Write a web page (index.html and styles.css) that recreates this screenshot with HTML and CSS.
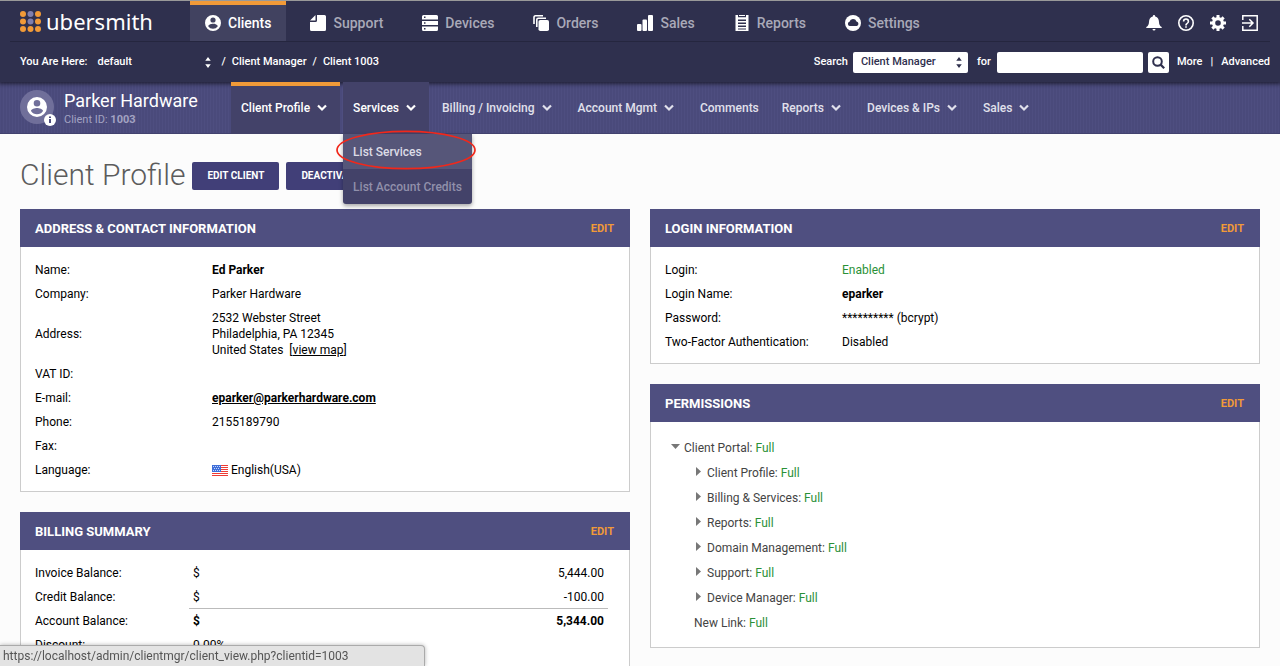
FILE: index.html
```html
<!DOCTYPE html>
<html lang="en">
<head>
<meta charset="utf-8">
<title>Client Profile</title>
<link rel="stylesheet" href="styles.css">
</head>
<body>
<header class="top">
  <div class="main-bar">
    <a class="logo" href="#">
      <svg width="21" height="21" viewBox="0 0 21 21" fill="#f19a38"><circle cx="3" cy="3" r="3"/><circle cx="10.500" cy="3" r="3" fill="#7f7fae"/><circle cx="18" cy="3" r="3"/><circle cx="3" cy="10.500" r="3"/><circle cx="10.500" cy="10.500" r="3" fill="#7f7fae"/><circle cx="18" cy="10.500" r="3"/><circle cx="3" cy="18" r="3"/><circle cx="10.500" cy="18" r="3"/><circle cx="18" cy="18" r="3"/></svg>
      <span>ubersmith</span>
    </a>
    <nav class="main-nav">
      <a class="tab active" href="#"><svg class="icon" viewBox="2 2 20 20"><path d="M12 2a10 10 0 1 0 0 20 10 10 0 0 0 0-20zm0 3a3 3 0 1 1 0 6.500 3 3 0 0 1 0-6.500zm0 14.200a7.200 7.200 0 0 1-6-3.220c.030-1.990 4-3.080 6-3.080s5.970 1.090 6 3.080a7.200 7.200 0 0 1-6 3.220z"/></svg>Clients</a>
      <a class="tab" href="#"><svg class="icon" viewBox="0 0 16 16"><path d="M7 0h7.500A1.500 1.500 0 0 1 16 1.500v13a1.500 1.500 0 0 1-1.500 1.500h-13A1.500 1.500 0 0 1 0 14.500V7h5.500A1.500 1.500 0 0 0 7 5.500zM5.500 0v5.500H0z"/></svg>Support</a>
      <a class="tab" href="#"><svg class="icon" viewBox="0 0 16 16"><path fill-rule="evenodd" d="M1.500 0h13A1.500 1.500 0 0 1 16 1.500V4.500H0v-3A1.500 1.500 0 0 1 1.500 0zM2 1.500v1.500h1.500V1.500zM0 6h16v4H0zm2 1.200v1.500h1.500V7.200zM0 11.500h16v3a1.500 1.500 0 0 1-1.500 1.500h-13A1.500 1.500 0 0 1 0 14.500zM2 13v1.500h1.500V13z"/></svg>Devices</a>
      <a class="tab" href="#"><svg class="icon" viewBox="0 0 16 16"><rect x="5.500" y="5" width="10.500" height="11" rx="1.800"/><path d="M3.800 12V4.800a1.500 1.500 0 0 1 1.500-1.500H13M1 9V2A1.500 1.500 0 0 1 2.500.800H10" fill="none" stroke="#fff" stroke-width="1.600"/></svg>Orders</a>
      <a class="tab" href="#"><svg class="icon" viewBox="0 0 16 16"><rect x="0" y="9" width="4.500" height="7" rx="1"/><rect x="5.500" y="4.500" width="4.500" height="11.500" rx="1"/><rect x="11" y="0" width="5" height="16" rx="1"/></svg>Sales</a>
      <a class="tab" href="#"><svg class="icon" viewBox="0 0 16 16"><path fill-rule="evenodd" d="M1.500 0H4v2.200h8V0h2.500v16h-13zM4 4.500V6h8V4.500zm0 3V9h8V7.500zm0 3V12h8v-1.500zm0 3V14.500h8v-1z"/><path d="M5 0h6v1H5z"/></svg>Reports</a>
      <a class="tab" href="#"><svg class="icon" viewBox="0 0 16 16"><circle cx="8" cy="8" r="8"/><path fill="#2f304e" d="M4.800 11a2.200 2.200 0 0 1-.300-4.300A3.700 3.700 0 0 1 11.500 6.500a2.300 2.300 0 0 1 .200 4.500z"/></svg>Settings</a>
    </nav>
    <div class="tools">
      <a href="#" aria-label="Notifications"><svg viewBox="0 0 16 16"><path d="M8 0a1.200 1.200 0 0 1 1.200 1.200v.400C12 2.200 12.800 4.500 13 7c.150 2.500.800 4 2.700 5v1H.300v-1C2.200 11 2.850 9.500 3 7c.200-2.500 1-4.800 3.800-5.400v-.400A1.200 1.200 0 0 1 8 0zM6.500 14h3a1.500 1.500 0 0 1-3 0z"/></svg></a>
      <a href="#" aria-label="Help"><svg viewBox="2 2 20 20"><path d="M11 18h2v-2h-2v2zm1-16a10 10 0 1 0 0 20 10 10 0 0 0 0-20zm0 18a8 8 0 1 1 0-16 8 8 0 0 1 0 16zm0-14a4 4 0 0 0-4 4h2a2 2 0 1 1 4 0c0 2-3 1.750-3 5h2c0-2.250 3-2.500 3-5a4 4 0 0 0-4-4z"/></svg></a>
      <a href="#" aria-label="Preferences"><svg viewBox="0 0 16 16"><circle cx="8" cy="8" r="4.400" fill="none" stroke="#fff" stroke-width="3.200"/><path d="M6.500 0h3v3h-3zM6.500 13h3v3h-3zM0 6.500h3v3H0zM13 6.500h3v3h-3zM1.300 3.400l2.100-2.100 2 2-2.100 2.100zM10.600 12.700l2.100-2.100 2 2-2.100 2.100zM1.300 12.600l2-2 2.100 2.100-2 2zM10.600 3.300l2-2 2.100 2.100-2 2z"/></svg></a>
      <a href="#" aria-label="Log out"><svg viewBox="0 0 16 16"><path d="M.8 5V.8h14.400v14.400H.8V11M0 8h10.500M7.300 4.300 11 8l-3.700 3.700" fill="none" stroke="#fff" stroke-width="1.500"/></svg></a>
    </div>
  </div>
  <div class="sub-bar">
    <div class="crumbs">
      <label for="brand">You Are Here:</label>
      <span class="picker brand-picker">
        <select id="brand"><option>default</option></select>
        <svg class="updown" viewBox="0 0 6 12"><path d="M3 0l3 4H0zM3 12L0 8h6z"/></svg>
      </span>
      <span>/</span><a href="#">Client Manager</a><span>/</span><a href="#">Client 1003</a>
    </div>
    <form class="search">
      <label for="area">Search</label>
      <span class="picker area-picker">
        <select id="area"><option>Client Manager</option></select>
        <svg class="updown" viewBox="0 0 6 12"><path d="M3 0l3 4H0zM3 12L0 8h6z"/></svg>
      </span>
      <label class="for" for="query">for</label>
      <input id="query" type="text">
      <button type="button" aria-label="Search"><svg width="13" height="13" viewBox="0 0 13 13"><circle cx="5.500" cy="5.500" r="4.300" fill="none" stroke="#2f304e" stroke-width="2"/><path d="M8.600 8.600l3.600 3.600" stroke="#2f304e" stroke-width="2.200"/></svg></button>
      <a href="#">More</a><span>|</span><a href="#">Advanced</a>
    </form>
  </div>
</header>

<section class="banner">
  <div class="client">
    <div class="avatar">
      <svg width="36" height="36" viewBox="0 0 36 36"><circle cx="17" cy="17" r="17" fill="#706f9a"/><path fill="#fff" d="M17 7a10 10 0 1 0 0 20 10 10 0 0 0 0-20zm0 3a3.300 3.300 0 1 1 0 6.600 3.300 3.300 0 0 1 0-6.600zm0 14.200a7.200 7.200 0 0 1-6-3.220c.030-1.990 4-3.080 6-3.080s5.970 1.090 6 3.080a7.200 7.200 0 0 1-6 3.220z"/><circle cx="30" cy="30" r="6" fill="#fff"/><path d="M29 26.500h2v1.500h-2zM29 29h2v4h-2z" fill="#4d4c7f"/></svg>
    </div>
    <div>
      <div class="client-name">Parker Hardware</div>
      <div class="client-id">Client ID: <b>1003</b></div>
    </div>
  </div>
  <nav class="client-nav">
    <a class="item current" href="#">Client Profile<svg class="chev" viewBox="0 0 13 8"><path d="M1 1.500l4 4 4-4"/></svg></a>
    <div class="menu-holder">
      <a class="item open" href="#">Services<svg class="chev" viewBox="0 0 13 8"><path d="M1 1.500l4 4 4-4"/></svg></a>
      <div class="menu">
        <a class="hover" href="#">List Services</a>
        <a href="#">List Account Credits</a>
      </div>
      <svg class="ring" width="140" height="40" viewBox="0 0 140 40"><ellipse cx="70" cy="20" rx="69" ry="18.700" fill="none" stroke="#f1281b" stroke-width="1.700"/></svg>
    </div>
    <a class="item" href="#">Billing / Invoicing<svg class="chev" viewBox="0 0 13 8"><path d="M1 1.500l4 4 4-4"/></svg></a>
    <a class="item" href="#">Account Mgmt<svg class="chev" viewBox="0 0 13 8"><path d="M1 1.500l4 4 4-4"/></svg></a>
    <a class="item" href="#">Comments</a>
    <a class="item" href="#">Reports<svg class="chev" viewBox="0 0 13 8"><path d="M1 1.500l4 4 4-4"/></svg></a>
    <a class="item" href="#">Devices &amp; IPs<svg class="chev" viewBox="0 0 13 8"><path d="M1 1.500l4 4 4-4"/></svg></a>
    <a class="item" href="#">Sales<svg class="chev" viewBox="0 0 13 8"><path d="M1 1.500l4 4 4-4"/></svg></a>
  </nav>
</section>

<main>
  <div class="title-row">
    <h1>Client Profile</h1>
    <button type="button">EDIT CLIENT</button>
    <button type="button">DEACTIVATE</button>
  </div>
  <div class="columns">
    <div class="column">
      <section class="panel">
        <div class="panel-head"><h2>ADDRESS &amp; CONTACT INFORMATION</h2><a href="#">EDIT</a></div>
        <div class="panel-body">
          <table class="facts">
            <tr><th>Name:</th><td><b>Ed Parker</b></td></tr>
            <tr><th>Company:</th><td>Parker Hardware</td></tr>
            <tr><th>Address:</th><td>2532 Webster Street<br>Philadelphia, PA 12345<br>United States &nbsp;[<a href="#">view map</a>]</td></tr>
            <tr><th>VAT ID:</th><td></td></tr>
            <tr><th>E-mail:</th><td><b><a href="#">eparker@parkerhardware.com</a></b></td></tr>
            <tr><th>Phone:</th><td>2155189790</td></tr>
            <tr><th>Fax:</th><td></td></tr>
            <tr><th>Language:</th><td><span class="lang"><svg width="16" height="11" viewBox="0 0 16 11"><rect width="16" height="11" fill="#fff"/><path fill="none" stroke="#ee3b34" d="M0 .5h16M0 2.500h16M0 4.500h16M0 6.500h16M0 8.500h16M0 10.500h16"/><rect width="9" height="7" fill="#3f6fd8"/><path fill="none" stroke="#c3d5ff" stroke-dasharray="1 1" d="M1 1.500h7M2 3.500h6M1 5.500h7"/></svg>English(USA)</span></td></tr>
          </table>
        </div>
      </section>
      <section class="panel billing">
        <div class="panel-head"><h2>BILLING SUMMARY</h2><a href="#">EDIT</a></div>
        <div class="panel-body">
          <table class="facts money">
            <tr><th>Invoice Balance:</th><td>$</td><td class="amount">5,444.00</td></tr>
            <tr class="last-item"><th>Credit Balance:</th><td>$</td><td class="amount">-100.00</td></tr>
            <tr><th>Account Balance:</th><td><b>$</b></td><td class="amount"><b>5,344.00</b></td></tr>
            <tr><th>Discount:</th><td colspan="2">0.00%</td></tr>
          </table>
        </div>
      </section>
    </div>
    <div class="column">
      <section class="panel">
        <div class="panel-head"><h2>LOGIN INFORMATION</h2><a href="#">EDIT</a></div>
        <div class="panel-body">
          <table class="facts">
            <tr><th>Login:</th><td><span class="ok">Enabled</span></td></tr>
            <tr><th>Login Name:</th><td><b>eparker</b></td></tr>
            <tr><th>Password:</th><td>********** (bcrypt)</td></tr>
            <tr><th>Two-Factor Authentication:</th><td>Disabled</td></tr>
          </table>
        </div>
      </section>
      <section class="panel">
        <div class="panel-head"><h2>PERMISSIONS</h2><a href="#">EDIT</a></div>
        <div class="panel-body tree-body">
          <ul class="tree">
            <li><svg class="down" viewBox="0 0 9 5"><path d="M0 0h9L4.500 5z"/></svg>Client Portal: <span class="ok">Full</span>
              <ul>
                <li><svg class="right" viewBox="0 0 5 9"><path d="M0 0v9l5-4.500z"/></svg>Client Profile: <span class="ok">Full</span></li>
                <li><svg class="right" viewBox="0 0 5 9"><path d="M0 0v9l5-4.500z"/></svg>Billing &amp; Services: <span class="ok">Full</span></li>
                <li><svg class="right" viewBox="0 0 5 9"><path d="M0 0v9l5-4.500z"/></svg>Reports: <span class="ok">Full</span></li>
                <li><svg class="right" viewBox="0 0 5 9"><path d="M0 0v9l5-4.500z"/></svg>Domain Management: <span class="ok">Full</span></li>
                <li><svg class="right" viewBox="0 0 5 9"><path d="M0 0v9l5-4.500z"/></svg>Support: <span class="ok">Full</span></li>
                <li><svg class="right" viewBox="0 0 5 9"><path d="M0 0v9l5-4.500z"/></svg>Device Manager: <span class="ok">Full</span></li>
                <li class="leaf">New Link: <span class="ok">Full</span></li>
              </ul>
            </li>
          </ul>
        </div>
      </section>
    </div>
  </div>
</main>
<div class="status">https://localhost/admin/clientmgr/client_view.php?clientid=1003</div>
</body>
</html>
```
FILE: styles.css
```css
* { box-sizing: border-box; }

html { overflow: hidden; }

body {
  margin: 0;
  background: #fcfcfc;
  color: #000;
  font: 12px/16px Roboto, "Liberation Sans", sans-serif;
}

a { color: inherit; text-decoration: none; }

button, input, select { font: inherit; }

svg { display: block; flex: none; }

/* Top header */
.top {
  position: relative;
  background: #2f304e;
  border-top: 1px solid #999;
  color: #fff;
  font-weight: 500;
  box-shadow: 0 1px 4px rgba(0, 0, 0, .4);
}

.main-bar {
  display: flex;
  height: 41px;
  margin-left: 10px;
  margin-right: 10px;
  padding-left: 10px;
  border-bottom: 1px solid #25263f;
}

.logo {
  display: flex;
  width: 170px;
  gap: 5px;
  align-items: center;
  font: 22px/32px "Noto Sans", sans-serif;
}

.main-nav { display: flex; gap: 9px; }

.tab {
  display: flex;
  align-items: center;
  gap: 7px;
  padding: 4px 15px 0;
  color: #a9a9b8;
  font-size: 14px;
}

.tab.active {
  padding-top: 0;
  border-top: 4px solid #f19a38;
  background: #414260;
  color: #fff;
}

.icon { width: 16px; height: 16px; fill: #fff; }

.tools {
  display: flex;
  gap: 16px;
  align-items: center;
  margin-left: auto;
  padding: 4px 12px 0 0;
}

.tools svg { width: 16px; height: 16px; fill: #fff; }

.sub-bar {
  display: flex;
  justify-content: space-between;
  align-items: center;
  height: 40px;
  padding: 0 10px 0 20px;
}

.crumbs, .search { display: flex; align-items: center; font-size: 11px; }

.crumbs { gap: 6px; }

.picker { display: grid; align-items: center; }

.picker select, .picker svg { grid-area: 1 / 1; }

.picker select {
  width: 100%;
  height: 21px;
  padding: 0;
  border: 0;
  background: transparent;
  color: inherit;
  appearance: none;
}

.updown {
  width: 6px;
  height: 11px;
  justify-self: end;
  fill: currentColor;
  pointer-events: none;
}

.brand-picker { width: 118px; margin-right: 4px; padding: 0 0 0 4px; }

.area-picker {
  width: 115px;
  margin: 0 9px 0 5px;
  padding: 0 6px 0 8px;
  border-radius: 2px;
  background: #fff;
  color: #2f304e;
}

.search input {
  width: 146px;
  height: 21px;
  margin: 0 5px 0 6px;
  border: 0;
  border-radius: 2px;
  background: #fff;
}

.search button {
  display: grid;
  place-items: center;
  width: 21px;
  height: 21px;
  margin-right: 8px;
  padding: 0;
  border: 0;
  border-radius: 2px;
  background: #fff;
}

.search span:not(.picker) { padding: 0 8px; }

/* Client banner */
.banner {
  display: flex;
  height: 52px;
  background: repeating-linear-gradient(90deg, #4e4e80 0 1px, #4a4a7b 1px 3px);
  box-shadow: inset 0 5px 4px -3px rgba(0, 0, 0, .35), inset 0 -1px 0 #42426f;
}

.client {
  display: flex;
  gap: 8px;
  width: 231px;
  padding: 8px 0 0 20px;
  color: #fff;
}

.client-name { font-size: 18px; line-height: 22px; }

.client-id { color: #a3a3c2; font-size: 11px; }

.client-nav {
  position: relative;
  display: flex;
  gap: 3px;
  color: #e1e1ec;
  font-size: 12px;
  font-weight: 500;
}

.item {
  display: flex;
  height: 100%;
  gap: 7px;
  align-items: center;
  padding: 0 10px;
}

.item.current, .item.open { background: #434269; color: #fff; }

.item.current { border-top: 4px solid #f19a38; padding-bottom: 4px; }

.chev { width: 13px; height: 8px; }

.chev path { fill: none; stroke: currentColor; stroke-width: 2.200; }

.menu-holder { position: relative; }

.menu {
  position: absolute;
  z-index: 2;
  top: 100%;
  left: 0;
  border-radius: 0 0 3px 3px;
  background: #434269;
  color: #9190ab;
  box-shadow: 0 2px 4px rgba(0, 0, 0, .35);
  white-space: nowrap;
}

.menu a { display: block; padding: 10px 10px 9px; }

.menu .hover { background: #565679; color: #dcdce6; }

.ring {
  position: absolute;
  z-index: 3;
  top: 48px;
  left: -7px;
  pointer-events: none;
}

/* Page content */
main { padding: 22px 20px 0; }

.title-row { display: flex; gap: 7px; align-items: center; margin-bottom: 16px; }

h1 {
  margin: 0;
  color: #5c5c5c;
  font-size: 30px;
  font-weight: 300;
  line-height: 37px;
}

.title-row button {
  height: 28px;
  margin-top: 3px;
  padding: 0 15px;
  border: 0;
  border-radius: 2px;
  background: #413f78;
  color: #fff;
  font-size: 10px;
  font-weight: 700;
}

.columns { display: grid; grid-template-columns: 1fr 1fr; gap: 20px; }

.column { display: flex; flex-direction: column; gap: 20px; }

.panel-head {
  display: flex;
  justify-content: space-between;
  align-items: center;
  height: 38px;
  padding: 2px 16px 0 15px;
  background: #4f4f80;
  color: #fff;
}

.panel-head h2 { margin: 0; font-size: 13px; font-weight: 700; }

.panel-head a { color: #f19a38; font-size: 11px; font-weight: 700; }

.panel-body {
  padding: 11px 21px 9px 14px;
  border: 1px solid #ccc;
  border-top: 0;
  background: #fff;
}

.facts { width: 100%; border-spacing: 0; table-layout: fixed; }

.facts th { width: 177px; text-align: left; font-weight: 400; }

.facts th, .facts td { height: 24px; padding: 4px 0; }

.facts td a { text-decoration: underline; }

.lang { display: flex; align-items: center; gap: 3px; }

.money th { width: 154px; }

.facts.money td { padding: 4px; }

.facts.money .amount { text-align: right; }

.facts.money .last-item td { padding-bottom: 3px; border-bottom: 1px solid #bbb; }

.billing .panel-body { padding-bottom: 20px; }

.ok { color: #2a9137; }

.tree-body { padding: 14px 20px 11px; }

.tree, .tree ul { margin: 0; padding: 0; list-style: none; }

.tree { color: #444; line-height: 25px; }

.tree ul { padding-left: 25px; }

.tree svg { display: inline-block; fill: #777; }

.down { width: 9px; height: 5px; margin-right: 4px; vertical-align: 3px; }

.right { width: 5px; height: 9px; margin-right: 6px; vertical-align: 1px; }

.tree .leaf { margin-left: -2px; }

.status {
  position: fixed;
  bottom: 0;
  left: 0;
  width: 425px;
  height: 21px;
  padding: 2px 3px;
  border: 1px solid #aaa;
  border-width: 1px 1px 0 0;
  border-radius: 0 4px 0 0;
  background: #e3e3e3;
  color: #555;
  box-shadow: 0 0 4px rgba(0, 0, 0, .3);
}
```
